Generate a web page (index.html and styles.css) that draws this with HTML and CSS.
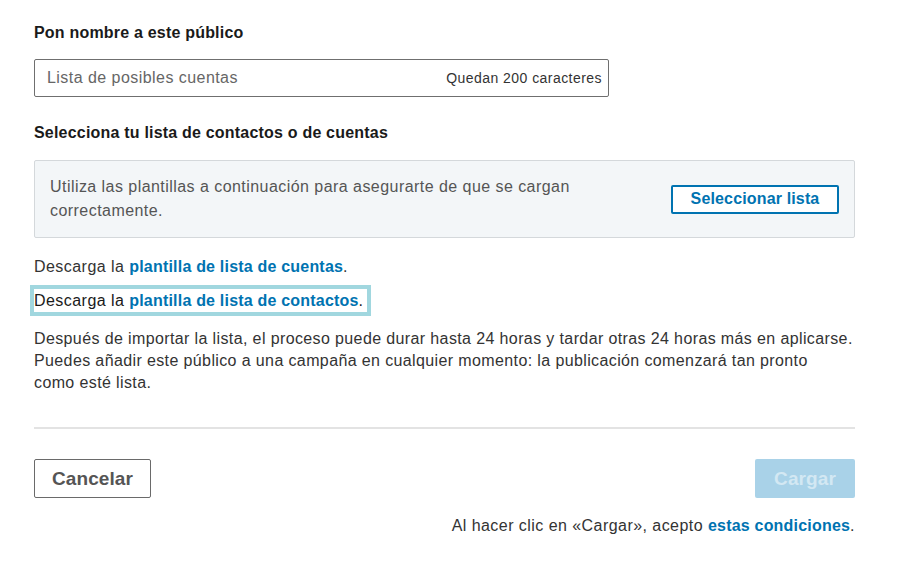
FILE: index.html
```html
<!DOCTYPE html>
<html lang="es">
<head>
<meta charset="utf-8">
<title>Público</title>
<link rel="stylesheet" href="styles.css">
</head>
<body>
<div class="page">
  <h2 class="label">Pon nombre a este público</h2>
  <div class="input">
    <span class="placeholder">Lista de posibles cuentas</span>
    <span class="counter">Quedan 200 caracteres</span>
  </div>

  <h2 class="label label-2">Selecciona tu lista de contactos o de cuentas</h2>
  <div class="upload-box">
    <p class="upload-text">Utiliza las plantillas a continuación para asegurarte de que se cargan correctamente.</p>
    <button class="btn-outline-blue">Seleccionar lista</button>
  </div>

  <p class="download">Descarga la <a class="link" href="#">plantilla de lista de cuentas</a>.</p>
  <p class="download download-2"><span class="highlight">Descarga la <a class="link" href="#">plantilla de lista de contactos</a>.</span></p>

  <p class="info">Después de importar la lista, el proceso puede durar hasta 24 horas y tardar otras 24 horas más en aplicarse. Puedes añadir este público a una campaña en cualquier momento: la publicación comenzará tan pronto como&nbsp;esté lista.</p>

  <hr class="divider">

  <div class="actions">
    <button class="btn-cancel">Cancelar</button>
    <button class="btn-primary" disabled>Cargar</button>
  </div>
  <p class="terms">Al hacer clic en «Cargar», acepto <a class="link" href="#">estas condiciones</a>.</p>
</div>
</body>
</html>
```
FILE: styles.css
```css
* { box-sizing: border-box; }
body {
  margin: 0;
  background: #fff;
  font-family: "Liberation Sans", Arial, sans-serif;
  color: #333;
  letter-spacing: 0.45px;
}
.page {
  width: 821px;
  margin-left: 34px;
  padding-top: 21px;
}
.label {
  margin: 0;
  font-size: 16px;
  line-height: 24px;
  font-weight: 700;
  color: #1a1a1a;
  letter-spacing: 0.2px;
}
.label-2 { margin-top: 24px; }
.input {
  margin-top: 14px;
  width: 575px;
  height: 38px;
  border: 1px solid #6f6f6f;
  border-radius: 2px;
  display: flex;
  align-items: center;
  justify-content: space-between;
  padding: 0 6px 0 12px;
}
.placeholder { font-size: 16px; color: #666; }
.counter { font-size: 14px; color: #333; }
.upload-box {
  margin-top: 15px;
  height: 78px;
  background: #f3f6f8;
  border: 1px solid #d4d8db;
  border-radius: 2px;
  display: flex;
  align-items: center;
  justify-content: space-between;
  padding: 0 15px;
}
.upload-text {
  margin: 0;
  max-width: 560px;
  font-size: 16px;
  line-height: 24px;
  color: #555;
}
.btn-outline-blue {
  font-family: inherit;
  letter-spacing: 0.15px;
  width: 168px;
  height: 29px;
  background: #fff;
  border: 2px solid #0073b1;
  border-radius: 2px;
  color: #0073b1;
  font-size: 16px;
  font-weight: 700;
  padding: 0;
}
.download {
  margin: 17px 0 0;
  font-size: 16px;
  line-height: 24px;
  color: #333;
}
.download-2 { margin-top: 6px; }
.highlight {
  display: inline-block;
  margin-left: -4px;
  border: 4px solid #a1d7df;
  padding: 0 3px 0 0;
  line-height: 23px;
  color: #1a1a1a;
}
.link {
  color: #0073b1;
  font-weight: 700;
  text-decoration: none;
  letter-spacing: 0.2px;
}
.info {
  margin: 12px 0 0;
  font-size: 16px;
  line-height: 22px;
  color: #333;
  letter-spacing: 0.38px;
}
.divider {
  margin: 33px 0 0;
  border: 0;
  height: 2px;
  background: #e3e3e3;
}
.actions {
  margin-top: 30px;
  display: flex;
  justify-content: space-between;
}
.btn-cancel {
  font-family: inherit;
  letter-spacing: 0.1px;
  width: 117px;
  height: 39px;
  background: #fff;
  border: 1px solid #6a6a6a;
  border-radius: 2px;
  color: #555;
  font-size: 19px;
  font-weight: 700;
  padding: 0;
}
.btn-primary {
  font-family: inherit;
  letter-spacing: 0.1px;
  width: 100px;
  height: 39px;
  background: #a9d2e8;
  border: 0;
  border-radius: 2px;
  color: #d3e8f3;
  font-size: 19px;
  font-weight: 700;
  padding: 0;
}
.terms {
  margin: 16px 0 0;
  text-align: right;
  font-size: 16px;
  line-height: 24px;
  color: #333;
}
```
